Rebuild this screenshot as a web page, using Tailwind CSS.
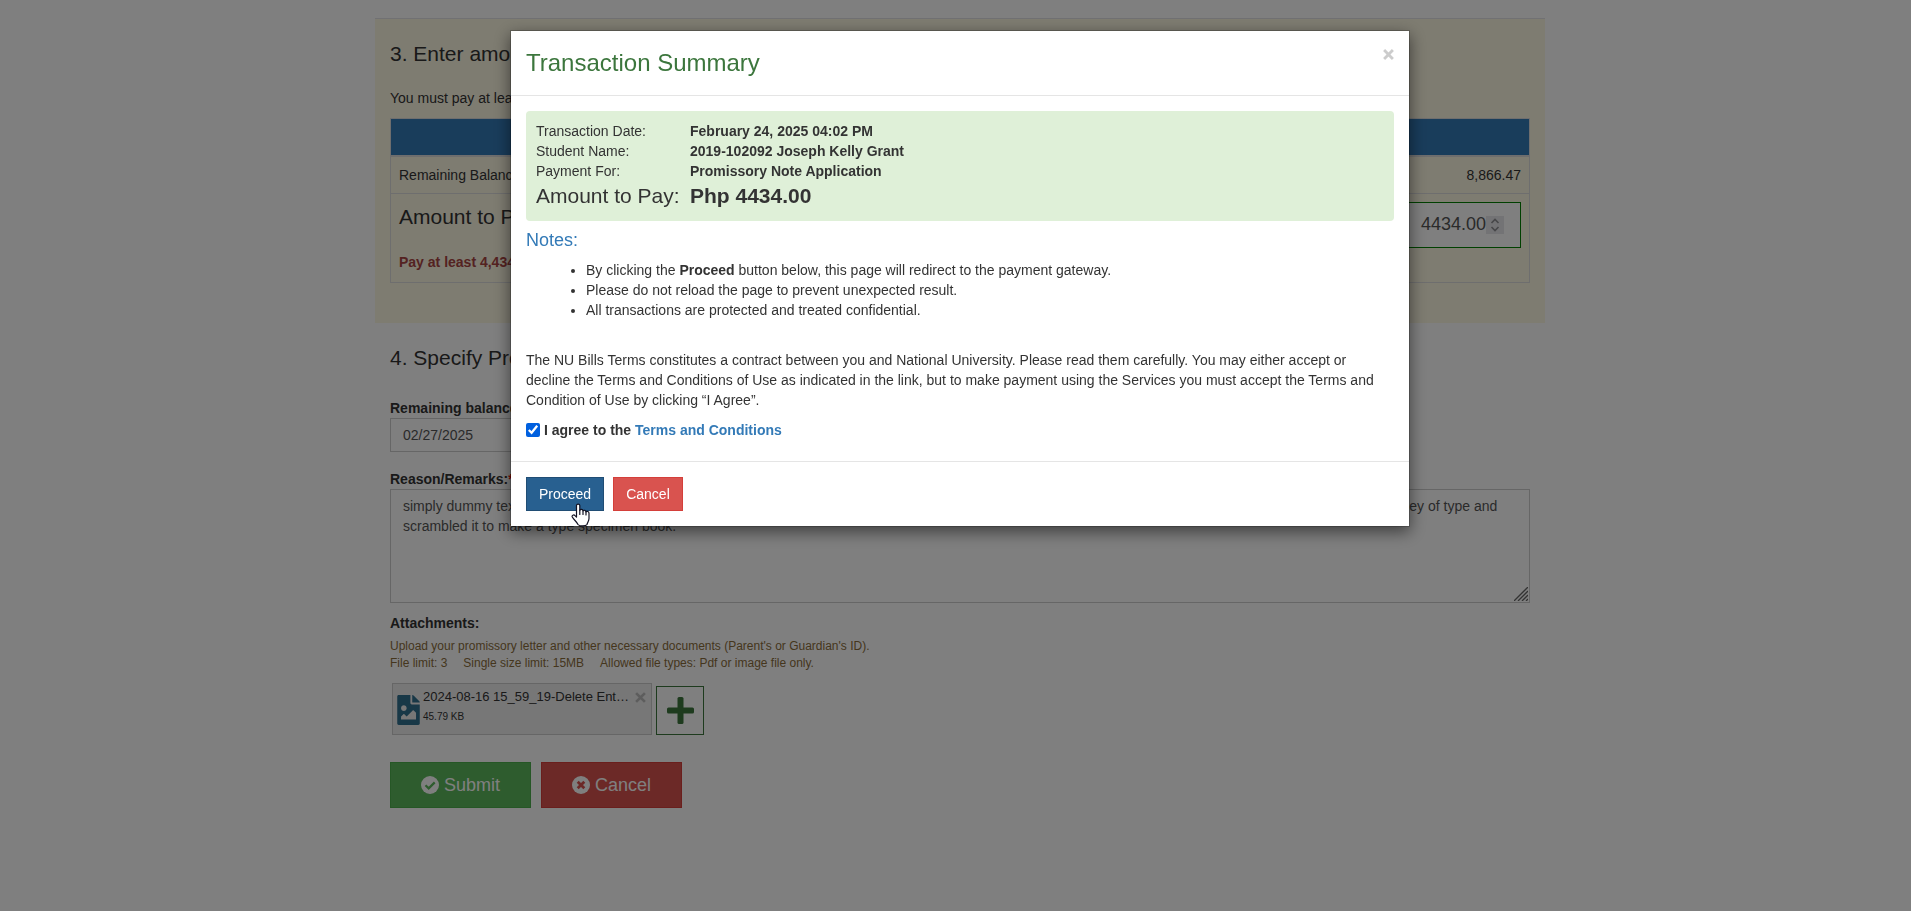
<!doctype html>
<html lang="en">
<head>
    <meta charset="UTF-8">
    <meta name="viewport" content="width=device-width, initial-scale=1.0">
    <script src="https://cdn.jsdelivr.net/npm/@tailwindcss/browser@4"></script>
    <title>NU Bills - Promissory Note Application</title>
</head>
<body class="h-screen overflow-hidden bg-white font-['Liberation_Sans',Arial,sans-serif] text-[14px] leading-[20px] text-[#333]">

<!-- payment form -->
<form class="pl-[9px] pt-[18px]">
    <div class="mx-auto w-full max-w-[1170px]">
        <section class="border-t border-[#e2e2e6] bg-[#fcf8e3] px-[15px] pt-5 pb-10">
            <h3 class="text-[21px] leading-[30px]">3. Enter amount to pay</h3>
            <p class="mt-[19px] mb-[10px]">You must pay at least 50% of the remaining balance.</p>
            <table class="w-full border-collapse border border-[#ddd]">
                <thead>
                    <tr class="h-[37px] border-b-2 border-[#ddd] bg-[#337ab7]">
                        <th colspan="2"></th>
                    </tr>
                </thead>
                <tbody>
                    <tr class="border-b border-[#ddd]">
                        <td class="p-2">Remaining Balance</td>
                        <td class="p-2 text-right">8,866.47</td>
                    </tr>
                    <tr class="align-top">
                        <td class="px-2 pt-2 pb-[10px]">
                            <label for="amount" class="block text-[21px] leading-[30px]">Amount to Pay</label>
                            <p class="mt-5 font-bold text-[#a94442]">Pay at least 4,434.00</p>
                        </td>
                        <td class="px-2 pt-2">
                            <div class="relative ml-auto w-[400px]">
                                <input type="number" id="amount" step="0.01" value="4434.00" class="block h-[46px] w-full border border-[#008000] bg-white pr-[34px] pl-4 text-right text-[18px] text-[#555] [&::-webkit-inner-spin-button]:appearance-none">
                                <!-- spinner -->
                                <svg class="pointer-events-none absolute top-[14px] right-[17px] h-[18px] w-[18px]" viewBox="0 0 18 18" fill="none" stroke="#8e8e92" stroke-width="1.6">
                                    <rect width="18" height="18" fill="#e6e6ea" stroke="none"/>
                                    <path d="M5.5 7L9 3.5L12.5 7M5.5 11L9 14.5L12.5 11"/>
                                </svg>
                            </div>
                        </td>
                    </tr>
                </tbody>
            </table>
        </section>

        <section class="px-[15px] pt-5">
            <h3 class="text-[21px] leading-[30px]">4. Specify Promissory Details</h3>

            <label for="due" class="mt-[25px] block font-bold">Remaining balance will be paid on:</label>
            <input type="text" id="due" value="02/27/2025" class="block h-[34px] w-1/2 border border-[#ccc] bg-white px-3 text-[#555]">

            <label for="remarks" class="mt-[17px] block font-bold">Reason/Remarks:<span class="text-[#f00]">*</span></label>
            <div class="relative">
                <textarea id="remarks" class="block h-[114px] w-full resize-none border border-[#ccc] bg-white px-3 py-[6px] text-[#555]">simply dummy text of the printing and typesetting industry. has been the industry's standard dummy text ever since the 1500s, when an unknown printer took a galley of type and scrambled it to make a type specimen book.</textarea>
                <!-- resize grip -->
                <svg class="pointer-events-none absolute right-[2px] bottom-[2px] h-[14px] w-[14px]" viewBox="0 0 14 14" stroke="#666" stroke-width="1.3">
                    <path d="M0 14L14 0M4 14L14 4M8 14L14 8M12 14L14 12"/>
                </svg>
            </div>

            <h4 class="mt-[10px] font-bold">Attachments:</h4>
            <div class="mt-[5px] text-[12px] leading-[17px] text-[#8a6d3b]">
                <p>Upload your promissory letter and other necessary documents (Parent's or Guardian's ID).</p>
                <p class="flex gap-4">
                    <span>File limit: 3</span>
                    <span>Single size limit: 15MB</span>
                    <span>Allowed file types: Pdf or image file only.</span>
                </p>
            </div>

            <div class="mt-[11px] flex items-end gap-1 pl-[2px]">
                <div class="flex h-[52px] w-[260px] border border-[#ccc] bg-[#eee] pl-1">
                    <svg class="mt-[11px] h-[30px] w-[23px] shrink-0" viewBox="0 0 384 512" fill="#31708f">
                        <path d="M384 121.941V128H256V0h6.059a24 24 0 0 1 16.97 7.029l97.941 97.941a24.002 24.002 0 0 1 7.03 16.971zM248 160c-13.2 0-24-10.8-24-24V0H24C10.745 0 0 10.745 0 24v464c0 13.255 10.745 24 24 24h336c13.255 0 24-10.745 24-24V160H248zm-135.455 16c26.51 0 48 21.49 48 48s-21.49 48-48 48-48-21.49-48-48 21.491-48 48-48zm208 240h-256l.485-48.485L104.545 328c4.686-4.686 11.799-4.201 16.485.485L160.545 368 264.06 264.485c4.686-4.686 12.284-4.686 16.971 0L320.545 304v112z"/>
                    </svg>
                    <div class="ml-[3px] w-[208px] whitespace-nowrap">
                        <p class="mt-[3px] text-[13px]">2024-08-16 15_59_19-Delete Ent…</p>
                        <p class="text-[10px]">45.79 KB</p>
                    </div>
                    <button type="button" aria-label="Remove file" class="mt-2 ml-1 h-[11px] w-[11px]">
                        <svg viewBox="0 0 10 10" stroke="#bbb" stroke-width="2.4"><path d="M1 1l8 8M9 1l-8 8"/></svg>
                    </button>
                </div>
                <button type="button" aria-label="Add file" class="flex h-[49px] w-[48px] items-center justify-center border border-[#3c763d]">
                    <svg class="h-[27px] w-[27px]" viewBox="0 0 27 27" fill="#3c763d">
                        <rect x="0" y="10.5" width="27" height="6" rx="1.5"/>
                        <rect x="10.5" y="0" width="6" height="27" rx="1.5"/>
                    </svg>
                </button>
            </div>

            <div class="mt-[27px] flex gap-[10px] text-[18px] text-white">
                <button type="submit" class="flex h-[46px] w-[141px] items-center justify-center gap-[5px] border border-[#4cae4c] bg-[#5cb85c]">
                    <svg class="h-[18px] w-[18px]" viewBox="0 0 18 18" fill="none">
                        <circle cx="9" cy="9" r="9" fill="#fff"/>
                        <path d="M4.5 9.2l3.2 3.2 6-6" stroke="#5cb85c" stroke-width="2.2"/>
                    </svg>
                    Submit
                </button>
                <button type="button" class="flex h-[46px] w-[141px] items-center justify-center gap-[5px] border border-[#d43f3a] bg-[#d9534f]">
                    <svg class="h-[18px] w-[18px]" viewBox="0 0 18 18" fill="none">
                        <circle cx="9" cy="9" r="9" fill="#fff"/>
                        <path d="M5.7 5.7l6.6 6.6M12.3 5.7l-6.6 6.6" stroke="#d9534f" stroke-width="2.8"/>
                    </svg>
                    Cancel
                </button>
            </div>
        </section>
    </div>
</form>

<!-- modal -->
<div class="fixed inset-0 bg-black/50 pt-[30px] pl-[9px]">
    <div role="dialog" aria-labelledby="summary-title" class="mx-auto max-w-[900px] border border-black/20 bg-white bg-clip-padding shadow-[0_5px_15px_rgba(0,0,0,0.5)]">
        <div class="flex items-start justify-between border-b border-[#e5e5e5] p-[15px]">
            <h2 id="summary-title" class="text-[24px] leading-[34px] text-[#3c763d]">Transaction Summary</h2>
            <button type="button" aria-label="Close" class="mt-[3px] h-[11px] w-[11px]">
                <svg viewBox="0 0 10 10" stroke="#ccc" stroke-width="2.6"><path d="M1 1l8 8M9 1l-8 8"/></svg>
            </button>
        </div>

        <div class="p-[15px]">
            <dl class="grid grid-cols-[154px_1fr] rounded bg-[#dff0d8] p-[10px]">
                <dt>Transaction Date:</dt>
                <dd class="font-bold">February 24, 2025 04:02 PM</dd>
                <dt>Student Name:</dt>
                <dd class="font-bold">2019-102092 Joseph Kelly Grant</dd>
                <dt>Payment For:</dt>
                <dd class="font-bold">Promissory Note Application</dd>
                <dt class="text-[21px] leading-[30px]">Amount to Pay:</dt>
                <dd class="text-[21px] leading-[30px] font-bold">Php 4434.00</dd>
            </dl>

            <h4 class="my-[10px] text-[18px] leading-[19px] text-[#337ab7]">Notes:</h4>
            <ul class="list-disc pl-[60px]">
                <li>By clicking the <b>Proceed</b> button below, this page will redirect to the payment gateway.</li>
                <li>Please do not reload the page to prevent unexpected result.</li>
                <li>All transactions are protected and treated confidential.</li>
            </ul>

            <p class="mt-[30px]">The NU Bills Terms constitutes a contract between you and National University. Please read them carefully. You may either accept or decline the Terms and Conditions of Use as indicated in the link, but to make payment using the Services you must accept the Terms and Condition of Use by clicking “I Agree”.</p>

            <div class="mt-[10px] mb-[6px] flex items-center gap-1 font-bold">
                <input type="checkbox" id="agree" checked class="h-[14px] w-[14px] accent-[#0060df]">
                <label for="agree">I agree to the <a href="#" class="text-[#337ab7]">Terms and Conditions</a></label>
            </div>
        </div>

        <div class="flex gap-[9px] border-t border-[#e5e5e5] p-[15px]">
            <button type="button" class="relative h-[34px] border border-[#204d74] bg-[#286090] px-3 text-white">
                Proceed
                <!-- hand pointer -->
                <svg class="absolute top-[25px] left-[44px] h-[24px] w-[19px]" viewBox="0 0 19 24" fill="#fff" stroke="#112" stroke-width="1.2" stroke-linejoin="round" stroke-linecap="round">
                    <path d="M5.5 14V2.6C5.5.5 8.8.5 8.8 2.6V7.2C9.5 5.9 11.8 6.2 12 7.8 13 6.8 14.8 7.3 15 8.8 16 8 18 8.4 18 10.2V15.5C18 18 16.5 19.5 16 21.5 15 23.3 8.5 23.6 7 21.5 6 19 3 17 1.3 14 .5 12.4 2.8 11.2 4 12.6Z"/>
                    <path d="M8.8 7.2V11.5M12 7.8V11.5M15 8.8V12" fill="none"/>
                </svg>
            </button>
            <button type="button" class="h-[34px] border border-[#d43f3a] bg-[#d9534f] px-3 text-white">Cancel</button>
        </div>
    </div>
</div>

</body>
</html>
